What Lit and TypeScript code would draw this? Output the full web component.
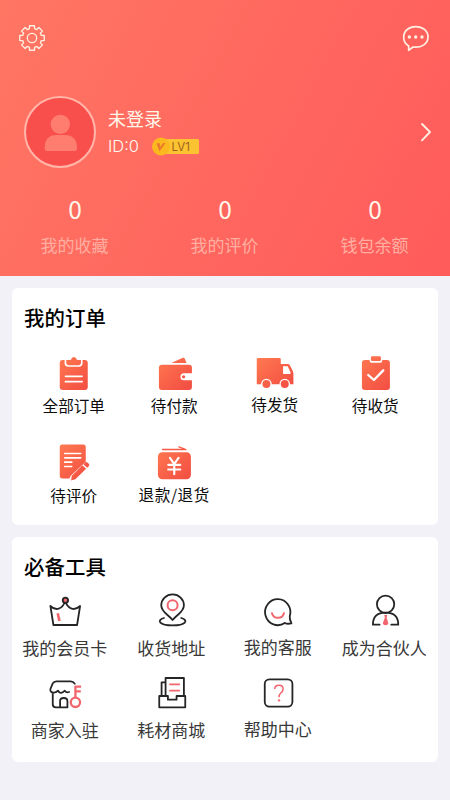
import { LitElement, html, css, svg, SVGTemplateResult } from "lit";
import { customElement, property } from "lit/decorators.js";

interface Entry {
  label: string;
  box: string;
  art: SVGTemplateResult;
  nudge?: number;
  tracking?: number;
}

const orders: Entry[] = [
  {
    label: "全部订单",
    box: "72.75 27 120 120",
    nudge: -1,
    art: svg`
      <rect class="fill" x="90" y="45" width="84" height="90" rx="9"/>
      <path class="cut" d="M107 43V54Q107 63 116 63H147Q156 63 156 54V43" stroke-width="5"/>
      <path class="fill" d="M112 45H123Q126 36 132 36Q139 36 142 45H152V53Q152 58 147 58H117Q112 58 112 53Z"/>
      <path class="cut" d="M107 94H157M107 110H157" stroke-width="5"/>`,
  },
  {
    label: "待付款",
    box: "374.25 27 120 120",
    nudge: -1,
    art: svg`
      <path class="fill" d="M423 54L456 39Q462 36 464 42L469 54Z"/>
      <rect class="fill" x="386" y="59" width="99" height="76" rx="9"/>
      <path class="paper" d="M488 85H461A10.500 10.500 0 0 0 461 106H488Z"/>
      <circle class="fill" cx="460" cy="95.500" r="5"/>`,
  },
  {
    label: "待发货",
    box: "75.75 27 120 120",
    nudge: -2,
    art: svg`
      <path class="fill" d="M85 39H149Q153 39 153 43V57H174Q178 57 180 60L189 78Q191 81 191 86V118H81V43Q81 39 85 39Z"/>
      <path class="paper" d="M160 64H174L182 82V87H160Z"/>
      <circle class="paper" cx="110" cy="117" r="16"/><circle class="paper" cx="165" cy="117" r="16"/>
      <circle class="fill" cx="110" cy="117" r="12"/><circle class="fill" cx="165" cy="117" r="12"/>`,
  },
  {
    label: "待收货",
    box: "377.25 27 120 120",
    nudge: -1,
    art: svg`
      <rect class="fill" x="395" y="45" width="84" height="90" rx="9"/>
      <rect class="paper" x="418" y="31" width="38" height="22" rx="6"/>
      <rect class="fill" x="422" y="34" width="30" height="14" rx="4"/>
      <path class="cut" d="M414 90L431 105L459 76" stroke-width="7"/>`,
  },
  {
    label: "待评价",
    box: "72.75 40.5 120 120",
    nudge: -1,
    art: svg`
      <path class="fill" d="M98 42H160Q168 42 168 50V94L123 136L119 144H98Q90 144 90 136V50Q90 42 98 42Z"/>
      <path class="cut" d="M105 69H153M105 82H153M105 95H126M105 108H126" stroke-width="5"/>
      <path class="fill" d="M126 136L158 104L169 115L137 146L124 150ZM161 101L166 96Q170 93 174 97L177 100Q181 104 177 107L172 112Z"/>`,
  },
  {
    label: "退款/退货",
    box: "374.25 40.5 120 120",
    nudge: -2,
    tracking: 0.6,
    art: svg`
      <path class="ink-red" d="M397 57H467L446 49" stroke-width="4"/>
      <rect class="fill" x="383" y="65" width="99" height="81" rx="13"/>
      <path class="cut" d="M419 82L432 100L445 82M432 100V131M414 103H450M414 117H450" stroke-width="6.500"/>`,
  },
];

const tools: Entry[] = [
  {
    label: "我的会员卡",
    box: "105.75 180 120 120",
    art: svg`
      <path class="ink" d="M122 228Q134 240 147 236Q160 232 166 214Q174 232 186 236Q198 240 211 228L202 285H131Z"/>
      <circle class="ink rose" cx="167" cy="211" r="8"/>
      <path class="ink-rose" d="M144 250L149 273" stroke-width="8"/>`,
  },
  {
    label: "收货地址",
    box: "425.25 180 120 120",
    art: svg`
      <path class="ink" d="M487 270C474 253 453 247 453 226A34 33 0 0 1 521 226C521 247 500 253 487 270Z"/>
      <circle class="ink-rose" cx="487" cy="226" r="15" stroke-width="6"/>
      <path class="ink" d="M461 264C438 271 447 286 487 286C527 286 536 271 513 264"/>`,
  },
  {
    label: "我的客服",
    box: "84.75 30 120 120",
    nudge: -1,
    art: svg`
      <path class="ink" d="M165 129A38 39 0 1 1 180 109Q179 117 185 130Q173 133 165 129"/>
      <path class="ink-rose" d="M126 97C130 119 160 119 163 97" stroke-width="6"/>`,
  },
  {
    label: "成为合伙人",
    box: "404.25 30 120 120",
    art: svg`
      <circle class="ink" cx="466" cy="73" r="26"/>
      <path class="ink" d="M448 134H428C428 110 442 98 466 98C490 98 504 110 504 134H483"/>
      <path class="rose" d="M462 105H471L469 113Q475 129 474 132Q466 140 458 132Q457 129 464 113Z"/>`,
  },
  {
    label: "商家入驻",
    box: "105.75 21 120 120",
    art: svg`
      <path class="ink" d="M195 56Q190 49 183 49H140Q132 49 129 55L122 72Q120 82 132 83Q139 83 145 77Q150 87 159 82L165 77Q170 84 178 81M129 83V118Q129 127 138 127H173V108Q173 99 162 99Q151 99 151 108V125"/>
      <path class="ink-rose" d="M197 98V65H214M197 79H213" stroke-width="7"/>
      <circle class="ink-rose" cx="197" cy="112" r="14" stroke-width="7"/>`,
  },
  {
    label: "耗材商城",
    box: "425.25 21 120 120",
    art: svg`
      <path class="ink" d="M466 92V39H521V92M465 52H454V91M447 93H473V104H499V93H525V127H447Z"/>
      <path class="ink-rose" d="M477 58H509M477 77H509" stroke-width="5"/>`,
  },
  {
    label: "帮助中心",
    box: "84.75 21 120 120",
    nudge: -1,
    art: svg`
      <rect class="ink" x="105" y="43" width="83" height="82" rx="14"/>
      <path class="ink-rose" d="M135 72Q135 61 148 61Q160 61 160 72Q160 79 153 84Q148 88 148 97" stroke-width="4.500"/>
      <circle class="rose" cx="148" cy="106" r="3.500"/>`,
  },
];

const gearPath = (() => {
  const teeth = 8;
  const pts: string[] = [];
  for (let i = 0; i < teeth; i++) {
    const mid = (i * 2 * Math.PI) / teeth - Math.PI / 2;
    for (const [offset, radius] of [[-0.27, 29], [-0.2, 37.5], [0.2, 37.5], [0.27, 29]]) {
      const a = mid + offset;
      pts.push(`${(96 + radius * Math.cos(a)).toFixed(1)} ${(114 + radius * Math.sin(a)).toFixed(1)}`);
    }
  }
  return `M${pts.join("L")}Z`;
})();

@customElement("icon-grid")
class IconGrid extends LitElement {
  @property({ attribute: false }) items: Entry[] = [];

  static styles = css`
    :host {
      display: grid;
      grid-template-columns: repeat(4, 1fr);
      grid-auto-rows: var(--pitch);
    }
    .item {
      display: flex;
      flex-direction: column;
      align-items: center;
      gap: var(--label-gap, 0px);
    }
    .icon { width: 40px; height: 40px; flex: none; overflow: visible; }
    .label {
      font-size: var(--label-size);
      line-height: 24px;
      height: 24px;
      margin-right: 1px;
      white-space: nowrap;
      color: var(--label-color);
    }
    .paper { fill: #fff; }
    .rose { fill: #f2666e; }
    .cut, .ink, .ink-rose, .ink-red { stroke-linecap: round; stroke-linejoin: round; }
    .cut { fill: none; stroke: #fff; }
    .ink { stroke: #252527; stroke-width: 5.4; }
    .ink:not(.rose) { fill: none; }
    .ink-rose { fill: none; stroke: #f2666e; stroke-linecap: butt; }
    .ink-red { fill: none; stroke: #f85a46; }
  `;

  render() {
    return this.items.map((item, i) => {
      const [x, y] = item.box.split(" ").map(Number);
      return html`
        <div class="item">
          <svg class="icon" viewBox=${item.box}>
            <defs>
              <linearGradient id="warm${i}" gradientUnits="userSpaceOnUse" x1=${x + 10} y1=${y + 10} x2=${x + 105} y2=${y + 110}>
                <stop offset="0" stop-color="#ff7950" /><stop offset="1" stop-color="#f24c42" />
              </linearGradient>
            </defs>
            <g fill="url(#warm${i})">${item.art}</g>
          </svg>
          <div class="label" style="margin-top:${item.nudge ?? 0}px;letter-spacing:${item.tracking ?? 0}px">${item.label}</div>
        </div>`;
    });
  }
}

@customElement("app-root")
class AppRoot extends LitElement {
  static styles = css`
    :host {
      display: block;
      box-sizing: border-box;
      height: 800px;
      overflow: hidden;
      background: #f2f1f8;
      font-family: "Noto Sans CJK SC", sans-serif;
      color: #000;
    }
    .header {
      height: 276px;
      background: linear-gradient(118deg, #ff7663 0%, #ff685f 50%, #ff5b5b 100%);
      color: #fff6ea;
    }
    .bar {
      display: flex;
      justify-content: space-between;
      padding: 22px 18px 0 16px;
    }
    .bar svg { width: 32px; height: 32px; }
    .line { fill: none; stroke: #fff0e2; stroke-linecap: round; stroke-linejoin: round; }
    .dot { fill: #fff0e2; }
    .profile {
      display: flex;
      align-items: center;
      height: 72px;
      padding: 42px 16px 0 24px;
    }
    .avatar { width: 72px; height: 72px; margin-right: 12px; }
    .who { flex: 1; }
    .name { font-size: 18px; line-height: 27px; }
    .meta { display: flex; align-items: center; height: 27px; }
    .uid { width: 43px; line-height: 27px; padding-top: 1px; font-family: Inter, sans-serif; font-size: 16.5px; font-weight: 300; color: #fffaf2; }
    .badge { width: 50px; height: 20px; }
    .lv { font: 11.5px Inter, sans-serif; fill: #a0641c; }
    .arrow { width: 16px; height: 24px; }
    .stats { display: grid; grid-template-columns: repeat(3, 1fr); text-align: center; padding-top: 25px; }
    .num { font-size: 24.5px; line-height: 32px; font-weight: 400; }
    .cap { font-size: 17px; line-height: 24px; margin-top: 8px; margin-right: 1px; color: #ffaea1; }
    .card {
      margin: 12px 12px 0;
      background: #fff;
      border-radius: 6px;
      box-sizing: border-box;
      overflow: hidden;
    }
    .orders { height: 236.5px; }
    .tools { height: 225px; margin-top: 12.5px; }
    .title { margin: 0; padding: 14px 12px 0; font-size: 20.4px; line-height: 30px; font-weight: 500; letter-spacing: 0.15px; }
    .order-grid {
      margin: 22px 12px 0;
      --pitch: 89.5px;
      --label-size: 15.6px;
      --label-color: #0c0c0c;
    }
    .tool-grid {
      margin-top: 9px;
      --pitch: 82px;
      --label-size: 17px;
      --label-gap: 5.5px;
      --label-color: #383838;
    }
  `;

  render() {
    return html`
      <div class="header">
        <div class="bar">
          <svg viewBox="48 66 96 96">
            <path class="line" stroke-width="4" d=${gearPath} />
            <circle class="line" stroke-width="4" cx="96" cy="114" r="14" />
          </svg>
          <svg viewBox="525 66 96 96">
            <path class="line" stroke-width="5" d="M551 151V138Q536 129 536 112C536 92 552 80 572 80C593 80 609 92 609 111C609 133 588 144 564 141Z" />
            <circle class="dot" cx="553" cy="111" r="5" /><circle class="dot" cx="572" cy="111" r="5" /><circle class="dot" cx="591" cy="111" r="5" />
          </svg>
        </div>
        <div class="profile">
          <svg class="avatar" viewBox="72 288 216 216">
            <circle cx="180" cy="396" r="105" fill="#f84f4c" stroke="#ffb7aa" stroke-width="6" />
            <circle cx="181" cy="373" r="29" fill="#ff7d6f" />
            <path d="M134 446Q134 405 169 405H195Q231 405 231 446Q231 453 224 453H141Q134 453 134 446Z" fill="#ff7d6f" />
          </svg>
          <div class="who">
            <div class="name">未登录</div>
            <div class="meta">
              <span class="uid">ID:0</span>
              <svg class="badge" viewBox="0 0 50 20">
                <rect x="10" y="3" width="38" height="15" rx="1.5" fill="#fbc332" />
                <circle cx="10" cy="10.500" r="9" fill="#fcb91f" />
                <path d="M5.500 7.500L8.500 7L9.500 11L12 7H14.500L8.500 15.500Z" fill="#ea7a2c" />
                <text class="lv" x="20.500" y="14.600">LV1</text>
              </svg>
            </div>
          </div>
          <svg class="arrow" viewBox="579 360 48 72">
            <path class="line" stroke-width="5.5" d="M591 372L615 396L591 421" />
          </svg>
        </div>
        <div class="stats">
          ${["我的收藏", "我的评价", "钱包余额"].map(
            (cap) => html`<div><div class="num">0</div><div class="cap">${cap}</div></div>`
          )}
        </div>
      </div>
      <div class="card orders">
        <h2 class="title">我的订单</h2>
        <icon-grid class="order-grid" .items=${orders}></icon-grid>
      </div>
      <div class="card tools">
        <h2 class="title">必备工具</h2>
        <icon-grid class="tool-grid" .items=${tools}></icon-grid>
      </div>
    `;
  }
}
